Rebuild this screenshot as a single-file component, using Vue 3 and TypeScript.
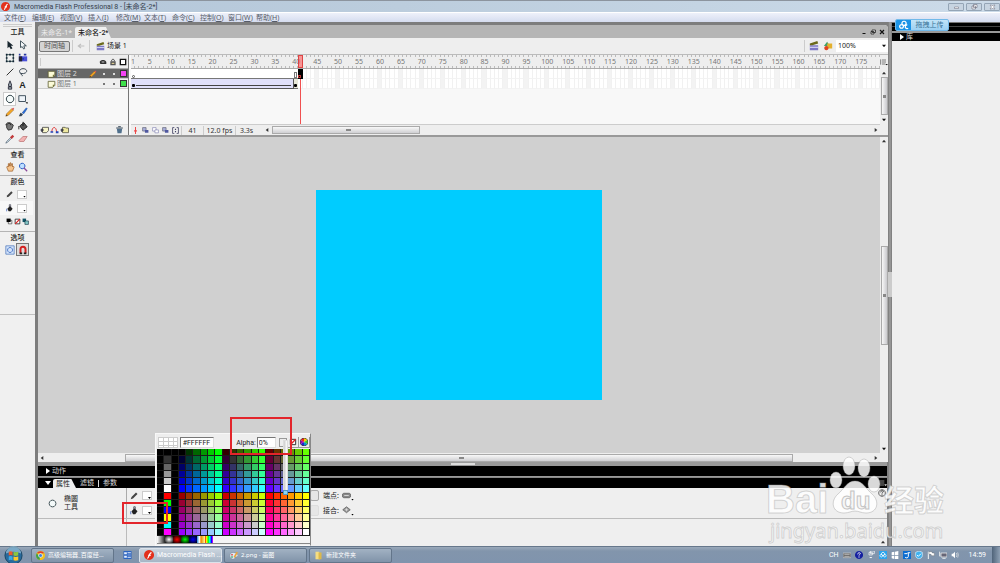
<script setup lang="ts">
import { ref } from 'vue'

interface Shape { d: string; f?: string; s?: string; w?: number }

const icons: Record<string, Shape[]> = {
  arrow: [{ d: 'M3 1v9l2-2 2 3 2-1-2-3h3z', f: '#18262e' }],
  subarrow: [{ d: 'M3 1v8l2-1 2 3 1-1-1-3h3z', f: '#f4f8fa', s: '#253842', w: 1 }],
  transform: [{ d: 'M2 2h8v8H2z', s: '#244', w: 1 }, { d: 'M1 1h2v2H1zM9 1h2v2H9zM1 9h2v2H1zM9 9h2v2H9zM5 1h2v2H5zM5 9h2v2H5zM1 5h2v2H1zM9 5h2v2H9z', f: '#123' }],
  gradient: [{ d: 'M1 4h10v6H1z', f: '#4a50d8' }, { d: 'M1 4h4v6H1z', f: '#223' }, { d: 'M1 1h2v2H1zM7 1h3v2H7zM5 6h2v2H5z', f: '#2838a0' }],
  line: [{ d: 'M2 10L10 2', s: '#333', w: 1.2 }],
  lasso: [{ d: 'M4 8C0 6 2 2 6 2s6 3 3 5-6 0-6 1 3 1 2 3', s: '#3d4a55', w: 1.2 }],
  pen: [{ d: 'M6 1l2 5-1 2H5L4 6zM4 8h4v3H4z', f: '#9aa6ac', s: '#223', w: 1 }],
  oval: [{ d: 'M6 1.500a4.500 4.500 0 1 0 .1 0z', f: '#f4fafa', s: '#34464c', w: 1.2 }],
  rect: [{ d: 'M1 2h8v7H1z', f: '#eef3f8', s: '#465662', w: 1.2 }, { d: 'M9 10h3l-1 2z', f: '#111' }],
  pencil: [{ d: 'M1 11l1-3 6-6 2 2-6 6z', f: '#f5a623', s: '#8a5a1a', w: 0.6 }, { d: 'M8 2l2-1 1 1-1 2z', f: '#d55' }, { d: 'M1 11l1-2 1 1z', f: '#222' }],
  brush: [{ d: 'M5 7l5-6 1 1-4 6z', f: '#2b6fe0', s: '#1a4a90', w: 0.6 }, { d: 'M1 11l2-4 2 1 1 1-2 2z', f: '#345' }],
  ink: [{ d: 'M2 4l4-2 4 3-2 5-4 1-2-3z', f: '#777', s: '#222', w: 1 }, { d: 'M1 5c1-4 5-4 6 0', s: '#111', w: 1 }],
  bucket: [{ d: 'M2 6l5-4 4 5-5 4z', f: '#555', s: '#111', w: 1 }, { d: 'M6 1v5M1 6v4', s: '#111', w: 1 }],
  dropper: [{ d: 'M1 11l1-2 5-5 1 1-5 5z', f: '#dceef5', s: '#456', w: 0.8 }, { d: 'M6 4l3-3 2 2-3 3z', f: '#c23a3a' }],
  eraser: [{ d: 'M1 8l5-5h5l-4 6H2z', f: '#f3b3b3', s: '#b56a6a', w: 0.8 }],
  hand: [{ d: 'M2 6l1-1 1 1V2h1v3l1-4h1v4l1-3h1v4l1-1 1 1-2 5H4z', f: '#f6c58e', s: '#9a5a22', w: 0.8 }],
  zoom: [{ d: 'M5 1.500a3.300 3.300 0 1 0 .1 0z', f: '#bfe0ff', s: '#2b62c8', w: 1.2 }, { d: 'M7 7l4 4', s: '#8a4a9a', w: 1.6 }],
  stroke: [{ d: 'M1 11l1-3 6-6 2 2-6 6z', f: '#444' }],
  fill: [{ d: 'M2 7l4-4 4 4-3 4H4z', f: '#222' }, { d: 'M5 5V1h2v4', s: '#334', w: 1 }, { d: 'M1 7v4', s: '#2a50b0', w: 1 }],
  bw: [{ d: 'M4 4h6v6H4z', f: '#fff', s: '#222', w: 1 }, { d: 'M1 1h7v6H1z', f: '#000' }],
  none: [{ d: 'M2 2h8v8H2z', f: '#fff', s: '#222', w: 1.4 }, { d: 'M2 10l8-8', s: '#d22', w: 2 }],
  swap: [{ d: 'M1 1h6v6H1z', f: '#156' }, { d: 'M5 5h6v6H5z', f: '#8cc', s: '#023', w: 1 }],
  draw: [{ d: 'M1 1h10v10H1z', f: '#d7e6fb', s: '#5a82c0', w: 1 }, { d: 'M6 3a3 3 0 1 0 .1 0z', s: '#3b6ac0', w: 1 }],
  magnet: [{ d: 'M3 10V5a3 3 0 0 1 6 0v5', s: '#d22020', w: 2.4 }, { d: 'M2 9h3v2H2zM7 9h3v2H7z', f: '#222' }],
  scene: [{ d: 'M1 5h10v6H1z', f: '#7d79c4' }, { d: 'M1 5V3l9-3 1 3-7 2z', f: '#6b6a1c' }, { d: 'M1 7h10v1H1z', f: '#e8e8ff' }],
  symbols: [{ d: 'M1 6l4-5 3 5z', f: '#3fa06a' }, { d: 'M5 3h6v6H5z', f: '#e3b02d' }, { d: 'M4 6a2.500 2.500 0 1 0 .1 0z', f: '#dd4422' }],
  eye: [{ d: 'M1 6c2-4 8-4 10 0v3H2z', f: '#333' }, { d: 'M4 5h4v2H4z', f: '#999' }],
  lock: [{ d: 'M2 5h8v6H2z', f: '#555' }, { d: 'M4 5V3q2-3 4 0v2', s: '#555', w: 1.4 }, { d: 'M4 7h4v2H4z', f: '#d8c890' }],
  box: [{ d: 'M2 2h8v8H2z', f: '#fff', s: '#111', w: 2 }],
  layer: [{ d: 'M1 2h10v6l-3 3H1z', f: '#fcfbd8', s: '#5c5c30', w: 1.2 }, { d: 'M11 7H8v4z', f: '#77773a' }],
  addlayer: [{ d: 'M3 2h9v5l-3 3H3z', f: '#f6f4c8', s: '#444', w: 1.2 }, { d: 'M0 6h5M2 4v5', s: '#223', w: 1.4 }],
  guide: [{ d: 'M2 9c0-9 7-9 7 0', s: '#d33', w: 1.4 }, { d: 'M0 8h4v2H0zM8 8h4v3H8z', f: '#24b' }],
  folder: [{ d: 'M3 2h4l1 1h4v7H3z', f: '#eee8a0', s: '#554', w: 1.2 }, { d: 'M0 6h5M2 4v5', s: '#223', w: 1.4 }],
  trash: [{ d: 'M2 4h8l-1 7H3z', f: '#50708c' }, { d: 'M1 3h10M4 1h4', s: '#345', w: 1.4 }],
  center: [{ d: 'M6 0v12', s: '#e22', w: 1.4 }, { d: 'M4 5h4v3H4z', f: '#e44' }],
  onion: [{ d: 'M1 1h6v6H1z', f: '#aab0dc', s: '#556', w: 1 }, { d: 'M5 5h6v5H5z', f: '#5058a0' }],
  onionline: [{ d: 'M1 1h6v6H1z', f: '#fff', s: '#77a', w: 1 }, { d: 'M5 5h6v5H5z', f: '#fff', s: '#77a', w: 1 }],
  brackets: [{ d: 'M4 1H1v10h3M8 1h3v10H8', s: '#446', w: 1.4 }, { d: 'M5 3h2v2H5zM5 7h2v2H5z', f: '#446' }],
  minus: [{ d: 'M3 8h6v2H3z', f: '#111' }],
  restore: [{ d: 'M4 2h7v5H4zM2 5h6v5H2z', f: '#ddd', s: '#111', w: 1.4 }],
  close: [{ d: 'M2 2l8 8M10 2l-8 8', s: '#111', w: 2.4 }],
  winmin: [{ d: 'M2 6h8v3H2z', f: '#fff', s: '#667', w: 1 }],
  winmax: [{ d: 'M4 1h7v6H4zM1 4h7v6H1z', f: '#fff', s: '#667', w: 1.2 }],
  winclose: [{ d: 'M1 2h3l2 2 2-2h3L8 6l3 4H8L6 8l-2 2H1l3-4z', f: '#fff', s: '#667', w: 1 }],
  up: [{ d: 'M3 8l3-4 3 4z', f: '#333' }],
  down: [{ d: 'M3 4l3 4 3-4z', f: '#111' }],
  left: [{ d: 'M8 3L4 6l4 3z', f: '#333' }],
  right: [{ d: 'M4 3l4 3-4 3z', f: '#333' }],
  options: [{ d: 'M1 2v8M3 3h6M3 6h6M3 9h5', s: '#444', w: 1 }, { d: 'M8 9h4l-2 2z', f: '#111' }],
  cloud: [{ d: 'M6 1.500a2.500 2.500 0 1 0 .1 0zM3 5.500a2.200 2.200 0 1 0 .1 0zM11 10a2.200 2.200 0 1 1-1-4', s: '#fff', w: 1.5 }],
  flash: [{ d: 'M6 0a6 6 0 1 0 .1 0z', f: '#e3301c' }, { d: 'M4 10c2 0 2-7 5-7M5 6.500h3', s: '#fff', w: 1.5 }],
  chrome: [{ d: 'M6 0a6 6 0 1 0 .1 0z', f: '#f2c21b' }, { d: 'M1 3a6 6 0 0 1 10 0H6z', f: '#e33b2e' }, { d: 'M1 3l4 5v4A6 6 0 0 1 1 3z', f: '#3ba14a' }, { d: 'M6 3.500a2.500 2.500 0 1 0 .1 0z', f: '#3b7fe0', s: '#fff', w: 1 }],
  panels: [{ d: 'M0 0h12v12H0z', f: '#2b63c0' }, { d: 'M1 2h4v3H1zM6 2h5v1H6zM6 4h5v1H6zM1 7h4v3H1zM6 7h5v1H6zM6 9h5v1H6z', f: '#e6f0ff' }],
  paint: [{ d: 'M6 2C1 2 0 6 2 9s6 2 6 0 4 0 4-3-3-4-6-4z', f: '#dfe9f2', s: '#789', w: 0.8 }, { d: 'M3 4h2v2H3z', f: '#d44' }, { d: 'M3 7h2v2H3z', f: '#3a6' }, { d: 'M6 8l4-7 2 1-4 7z', f: '#e9a33c' }],
  dir: [{ d: 'M2 1h5l1 10H2z', f: '#f5dd82' }, { d: 'M6 2h4v9H6z', f: '#dcb84a' }],
  keyboard: [{ d: 'M0 3h12v7H0z', f: '#666', s: '#ccc', w: 1 }, { d: 'M2 5h8M2 8h8', s: '#ddd', w: 1 }],
  help: [{ d: 'M6 0a6 6 0 1 0 .1 0z', f: '#1420a0' }, { d: 'M4 5c0-3 4-3 4-1 0 1-2 1-2 3M6 8v2', s: '#fff', w: 1.3 }],
  stack: [{ d: 'M5 0h6v4H5zM3 2h5v4H3z', s: '#fff', w: 1 }, { d: 'M3 9h5l-2 2z', f: '#fff' }],
  netdisk: [{ d: 'M0 0h12v12H0z', f: '#29a4ee' }, { d: 'M6 2a2.500 2.500 0 1 0 .1 0zM3.500 5a2 2 0 1 0 .1 0zM8.500 5a2 2 0 1 0 .1 0z', s: '#fff', w: 1.2 }],
  windows: [{ d: 'M1 2l4-1v5H1zM6 1l5-1v6H6zM1 7h4v5l-4-1zM6 7h5v5H6z', f: '#fff' }],
  sync: [{ d: 'M0 0h12v12H0z', f: '#0a6cd0' }, { d: 'M2 4h4l2-2v6c0 3-4 3-5 1M9 3l2-1', s: '#fff', w: 1.5 }],
  shield: [{ d: 'M6 0l5 2v5c0 3-3 4-5 5-2-1-5-2-5-5V2z', f: '#3db2f0', s: '#e4f4ff', w: 1 }, { d: 'M3 6l2 2 4-4', s: '#fff', w: 1.4 }],
  flag: [{ d: 'M2 1v11', s: '#fff', w: 1.4 }, { d: 'M3 1h4l1 2h3v4H7L6 5H3z', f: '#fff', s: '#555', w: 0.5 }],
  network: [{ d: 'M3 3h9v6H3z', f: '#667', s: '#eee', w: 1.2 }, { d: 'M1 1v7M5 11h5', s: '#eee', w: 1.4 }],
  speaker: [{ d: 'M1 4h2l3-3v10L3 8H1z', f: '#fff' }, { d: 'M8 3q2 3 0 6M10 2q2 4 0 8', s: '#eee', w: 0.9 }],
  wheel: [{ d: 'M6 6V0a6 6 0 0 1 5 3z', f: '#fc0' }, { d: 'M6 6l5-3a6 6 0 0 1 0 6z', f: '#4c2' }, { d: 'M6 6l5 3a6 6 0 0 1-5 3z', f: '#09c' }, { d: 'M6 6v6a6 6 0 0 1-5-3z', f: '#22c' }, { d: 'M6 6L1 9a6 6 0 0 1 0-6z', f: '#90b' }, { d: 'M6 6L1 3a6 6 0 0 1 5-3z', f: '#e22' }, { d: 'M6 0a6 6 0 1 0 .1 0z', s: '#222', w: 1 }],
  cap: [{ d: 'M3 3h6c4 0 4 6 0 6H3C-1 9-1 3 3 3z', f: '#888', s: '#444', w: 0.8 }, { d: 'M3 6h6', s: '#eee', w: 1 }],
  join: [{ d: 'M6 1l5 4-5 4-5-4z', f: '#999', s: '#444', w: 0.8 }, { d: 'M4 5h4M6 3v4', s: '#eee', w: 0.8 }],
  question: [{ d: 'M6 1a5 5 0 1 0 .1 0z', f: '#eee', s: '#222', w: 1 }, { d: 'M4 5c0-3 4-3 4-1 0 1-2 1-2 3M6 8v2', s: '#222', w: 1.2 }],
  menu: [{ d: 'M1 3h7M1 6h7M1 9h7', s: '#aaa', w: 1.2 }, { d: 'M8 8h4l-2 3z', f: '#ddd' }],
  back: [{ d: 'M11 6H3M6 3L2 6l4 3', s: '#c0c0c0', w: 1.8 }],
}

const menus = ['文件(F)', '编辑(E)', '视图(V)', '插入(I)', '修改(M)', '文本(T)', '命令(C)', '控制(O)', '窗口(W)', '帮助(H)']
const tools = [
  ['arrow', '选择'], ['subarrow', '部分选取'], ['transform', '任意变形'], ['gradient', '填充变形'],
  ['line', '线条'], ['lasso', '套索'], ['pen', '钢笔'], ['text', '文本'],
  ['oval', '椭圆'], ['rect', '矩形'], ['pencil', '铅笔'], ['brush', '刷子'],
  ['ink', '墨水瓶'], ['bucket', '颜料桶'], ['dropper', '滴管'], ['eraser', '橡皮擦'],
]
const frames = Array.from({ length: 179 }, (_, i) => i + 1)
const labels = [1, ...Array.from({ length: 35 }, (_, i) => (i + 1) * 5)]
const layers = [
  { name: '图层 2', color: '#f442f4', active: true },
  { name: '图层 1', color: '#3ee04a', active: false },
]
// Web-safe palette: a column of grays and primaries, then six 6x6 blocks, one per red level
const left = ['#000', '#333', '#666', '#999', '#ccc', '#fff', '#f00', '#0f0', '#00f', '#ff0', '#0ff', '#f0f']
const web = ['00', '33', '66', '99', 'cc', 'ff']
const cells: string[] = []
for (let r = 0; r < 12; r++) {
  cells.push('#000', left[r], '#000')
  for (let c = 0; c < 18; c++) {
    const red = web[Math.floor(c / 6) + (r > 5 ? 3 : 0)]
    cells.push('#' + red + web[c % 6] + web[r % 6])
  }
}
const gradients = ['gray', 'white', 'red', 'green', 'blue', 'gold', 'rainbow']
const tray = ['keyboard', 'help', 'stack', 'netdisk', 'windows', 'sync', 'shield', 'flag', 'network', 'speaker']
const tasks = [
  { icon: 'chrome', text: '高级编辑器_百度经...', cls: 'first' },
  { icon: 'flash', text: 'Macromedia Flash ...', cls: 'current' },
  { icon: 'paint', text: '2.png - 画图', cls: '' },
  { icon: 'dir', text: '新建文件夹', cls: '' },
]
const hex = ref('#FFFFFF')
const alpha = ref('0%')
const zoomLevel = ref('100%')
</script>

<template>
  <div class="app">
    <svg class="defs" aria-hidden="true">
      <symbol v-for="(shapes, name) in icons" :id="'i-' + name" :key="name" viewBox="0 0 12 12">
        <path v-for="(s, i) in shapes" :key="i" :d="s.d" :fill="s.f || 'none'" :stroke="s.s || 'none'" :stroke-width="s.w || 0" />
      </symbol>
    </svg>

    <header class="titlebar">
      <svg class="ic"><use href="#i-flash" /></svg>
      <span class="title">Macromedia Flash Professional 8 - [未命名-2*]</span>
      <div class="winbtns">
        <button v-for="b in ['winmin', 'winmax', 'winclose']" :key="b" :aria-label="b"><svg><use :href="'#i-' + b" /></svg></button>
      </div>
    </header>
    <nav class="menubar">
      <button v-for="m in menus" :key="m">{{ m.slice(0, 3) }}<u>{{ m[3] }}</u>)</button>
    </nav>

    <div class="main">
      <aside class="tools">
        <div class="grip"></div>
        <h2>工具</h2>
        <div class="toolgrid all">
          <button v-for="t in tools" :key="t[0]" :class="{ on: t[0] === 'oval' }" :aria-label="t[1]">
            <b v-if="t[0] === 'text'">A</b>
            <svg v-else><use :href="'#i-' + t[0]" /></svg>
          </button>
        </div>
        <h2 class="sep">查看</h2>
        <div class="toolgrid">
          <button aria-label="手形"><svg><use href="#i-hand" /></svg></button>
          <button aria-label="缩放"><svg><use href="#i-zoom" /></svg></button>
        </div>
        <h2 class="sep">颜色</h2>
        <div class="colorrow"><svg><use href="#i-stroke" /></svg><button class="swatch" aria-label="笔触颜色"></button></div>
        <div class="colorrow lit"><svg><use href="#i-fill" /></svg><button class="swatch" aria-label="填充颜色"></button></div>
        <div class="mini">
          <button v-for="n in ['bw', 'none', 'swap']" :key="n" :aria-label="n"><svg><use :href="'#i-' + n" /></svg></button>
        </div>
        <h2 class="sep">选项</h2>
        <div class="toolgrid">
          <button aria-label="对象绘制"><svg><use href="#i-draw" /></svg></button>
          <button class="pressed" aria-label="贴紧"><svg><use href="#i-magnet" /></svg></button>
        </div>
        <div class="toolend"></div>
      </aside>

      <section class="work">
        <div class="doc">
          <div class="tabs">
            <button class="tab">未命名-1*</button>
            <button class="tab active">未命名-2*</button>
            <div class="docbtns">
              <button v-for="b in ['minus', 'restore', 'close']" :key="b" :aria-label="b"><svg><use :href="'#i-' + b" /></svg></button>
            </div>
          </div>
          <div class="scenebar">
            <button class="tlbtn">时间轴</button>
            <i class="vr"></i>
            <svg class="ic"><use href="#i-back" /></svg>
            <i class="vr"></i>
            <svg class="ic sc"><use href="#i-scene" /></svg>
            <span>场景 1</span>
            <div class="scright">
              <i class="vr"></i>
              <button aria-label="编辑场景"><svg><use href="#i-scene" /></svg></button>
              <button aria-label="编辑元件"><svg><use href="#i-symbols" /></svg></button>
              <label><select v-model="zoomLevel" aria-label="缩放比率"><option>100%</option></select><svg><use href="#i-down" /></svg></label>
            </div>
          </div>

          <div class="timeline">
            <div class="layers">
              <div class="lhead">
                <i class="vr"></i>
                <svg><use href="#i-eye" /></svg><svg><use href="#i-lock" /></svg><svg><use href="#i-box" /></svg>
              </div>
              <div v-for="l in layers" :key="l.name" class="layer" :class="{ active: l.active }">
                <svg class="ic"><use href="#i-layer" /></svg>
                <span>{{ l.name }}</span>
                <svg v-if="l.active" class="pc"><use href="#i-pencil" /></svg>
                <i class="dot"></i><i class="dot"></i>
                <i class="chip" :style="{ background: l.color }"></i>
              </div>
              <div class="lfoot">
                <button v-for="n in ['addlayer', 'guide', 'folder']" :key="n" :aria-label="n"><svg><use :href="'#i-' + n" /></svg></button>
                <button class="bin" aria-label="删除图层"><svg><use href="#i-trash" /></svg></button>
              </div>
            </div>
            <div class="frames">
              <div class="fgrid ruler">
                <i v-for="f in frames" :key="f" class="tick" :style="{ gridColumn: String(f) }"></i>
                <span v-for="n in labels" :key="'l' + n" :style="{ gridColumn: String(n) }">{{ n }}</span>
                <i class="headbox"></i>
              </div>
              <div class="fgrid row">
                <i v-for="f in frames" :key="f" :class="{ five: f % 5 === 0 }" :style="{ gridColumn: String(f) }"></i>
                <b class="span blank"><em class="ring"></em></b>
                <b class="kf"><em class="hollow"></em></b>
                <b class="now"><em></em></b>
              </div>
              <div class="fgrid row">
                <i v-for="f in frames" :key="f" :class="{ five: f % 5 === 0 }" :style="{ gridColumn: String(f) }"></i>
                <b class="span tween"><em></em></b>
                <b class="kf beige"><em></em></b>
              </div>
              <div class="fgrid rest"><i class="headline"></i></div>
              <div class="ffoot">
                <button v-for="(n, k) in ['center', 'onion', 'onionline', 'onion', 'brackets']" :key="k" class="fb" :aria-label="n"><svg><use :href="'#i-' + n" /></svg></button>
                <span class="n1">41</span><span class="n2">12.0 fps</span><span class="n1">3.3s</span>
                <div class="hbar"><svg><use href="#i-left" /></svg><i class="thumb"></i><i class="space"></i><svg><use href="#i-right" /></svg></div>
              </div>
            </div>
            <div class="vbar tl">
              <svg class="opt"><use href="#i-options" /></svg>
              <svg><use href="#i-up" /></svg>
              <i class="vthumb"></i>
              <svg><use href="#i-down" /></svg>
            </div>
          </div>

          <div class="stagerow">
            <div class="stage"><div class="canvas"></div></div>
            <div class="vbar st">
              <svg><use href="#i-up" /></svg><i class="space"></i><i class="vthumb"></i><i class="space two"></i><svg><use href="#i-down" /></svg>
            </div>
          </div>
          <div class="hbar st"><svg><use href="#i-left" /></svg><i class="pad"></i><i class="thumb"></i><i class="space"></i><svg><use href="#i-right" /></svg></div>
        </div>

        <div class="panels">
          <i class="notch"></i>
          <div class="bar"><svg class="tri"><path d="M1 0l4 3-4 3z" fill="#fff" /></svg>动作</div>
          <div class="bar two">
            <svg class="tri"><path d="M0 1h6L3 5z" fill="#fff" /></svg>
            <button class="ptab">属性</button><button>滤镜</button><i></i><button>参数</button>
            <svg class="pm"><use href="#i-menu" /></svg>
          </div>
          <div class="props">
            <div class="pupper">
              <div class="pname"><svg><use href="#i-oval" /></svg><span>椭圆<br />工具</span></div>
              <div class="pcolors">
                <div><svg><use href="#i-stroke" /></svg><button class="swatch" aria-label="笔触"></button></div>
                <div><svg><use href="#i-fill" /></svg><button class="swatch" aria-label="填充"></button></div>
              </div>
              <div class="pcaps">
                <div><button class="slot" aria-label="自定义"></button><span>端点:</span><svg><use href="#i-cap" /></svg><i class="drop"></i></div>
                <div><button class="slot dim" aria-label="缩放"></button><span>接合:</span><svg><use href="#i-join" /></svg><i class="drop"></i></div>
              </div>
              <svg class="pq"><use href="#i-question" /></svg>
            </div>
            <div class="plower"><svg><use href="#i-up" /></svg></div>
          </div>
        </div>
      </section>

      <div class="divider"><i></i></div>

      <aside class="library">
        <div class="ltop"></div>
        <div class="lbar"><svg class="tri"><path d="M1 0l4 3-4 3z" fill="#fff" /></svg>库</div>
      </aside>
    </div>

    <footer class="taskbar">
      <button class="orb" aria-label="开始">
        <svg viewBox="0 0 20 20">
          <circle cx="10" cy="10" r="9" fill="#286a9c" stroke="#16425f" />
          <path d="M2 8a8 8 0 0 1 16 0q-8-4-16 0z" fill="#9cc4da" opacity=".7" />
          <path d="M5 6q2-1 4 0v4q-2-1-4 0z" fill="#ee5a2a" /><path d="M10 6q2 1 5 0v4q-3 1-5 0z" fill="#8cc63f" />
          <path d="M5 11q2-1 4 0v4q-2-1-4 0z" fill="#3ba9e8" /><path d="M10 11q2 1 5 0v4q-3 1-5 0z" fill="#fdc82a" />
        </svg>
      </button>
      <template v-for="(t, i) in tasks" :key="t.text">
        <button class="task" :class="t.cls"><svg><use :href="'#i-' + t.icon" /></svg><span>{{ t.text }}</span></button>
        <button v-if="i === 0" class="pin" aria-label="面板"><svg><use href="#i-panels" /></svg></button>
      </template>
      <div class="tray">
        <span>CH</span>
        <svg v-for="n in tray" :key="n"><use :href="'#i-' + n" /></svg>
        <time>14:59</time>
        <i class="peek"></i>
      </div>
    </footer>

    <div class="upload"><i><svg><use href="#i-cloud" /></svg></i><button>拖拽上传</button></div>

    <div class="picker">
      <div class="phead">
        <i class="preview"></i>
        <input v-model="hex" class="hex" aria-label="颜色值" />
        <label for="alpha">Alpha:</label>
        <input id="alpha" v-model="alpha" class="alpha" />
        <button class="dd" aria-label="Alpha 滑块"></button>
        <button class="pb" aria-label="无颜色"><svg><use href="#i-none" /></svg></button>
        <button class="pb" aria-label="颜色选择器"><svg><use href="#i-wheel" /></svg></button>
      </div>
      <div class="cells"><i v-for="(c, i) in cells" :key="i" :style="{ background: c }"></i></div>
      <div class="grads"><i v-for="g in gradients" :key="g" :class="g"></i></div>
      <div class="slider"><i></i></div>
    </div>

    <div class="mark alpha-mark"></div>
    <div class="mark fill-mark"></div>

    <svg class="water" viewBox="0 0 184 92">
      <g fill="#fff" fill-opacity=".85" stroke="#999" stroke-opacity=".4" stroke-width="1">
        <ellipse cx="83" cy="12" rx="6" ry="9" /><ellipse cx="98" cy="14" rx="6" ry="9" />
        <ellipse cx="70" cy="26" rx="6" ry="8" /><ellipse cx="108" cy="30" rx="6" ry="8" />
        <path d="M89 27c8 0 11 8 17 13 8 7 6 19-6 19-5 0-7-2-11-2s-6 2-11 2c-12 0-14-12-6-19 6-5 9-13 17-13z" />
        <text x="0" y="59" class="bai">Bai</text>
        <text x="118" y="57" class="jy">经验</text>
        <text x="4" y="84" class="url">jingyan.baidu.com</text>
      </g>
      <text x="75" y="55" class="du">du</text>
    </svg>
  </div>
</template>

<style>
html, body { margin: 0; }
</style>

<style scoped>
* { box-sizing: border-box; }
.app {
  position: relative; height: 100vh; display: flex; flex-direction: column; overflow: hidden;
  font: 7px/10px "Noto Sans", "Noto Sans CJK SC", sans-serif; color: #222; background: #efefef;
}
button { font: inherit; color: inherit; border: 0; padding: 0; margin: 0; background: none; display: flex; align-items: center; justify-content: center; white-space: nowrap; }
input, select { font: inherit; color: inherit; margin: 0; padding: 0; border: 0; min-width: 0; appearance: none; border-radius: 0; outline: 0; }
svg { width: 8px; height: 8px; flex: none; display: block; }
i, em { font-style: normal; display: block; }
.defs { position: absolute; width: 0; height: 0; }
h2 { margin: 0; font-size: 7px; line-height: 10px; font-weight: 500; text-align: center; }

.titlebar { height: 12px; flex: none; display: flex; align-items: center; gap: 4px; padding-left: 1px; border-top: 1px solid #8c949e; background: linear-gradient(90deg, #b3c6d9, #bccddd 40%, #ccdbe9); }
.titlebar .ic { width: 9px; height: 9px; }
.title { font-family: Roboto, "Noto Sans CJK SC", sans-serif; color: #35404c; white-space: nowrap; }
.winbtns { margin-left: auto; display: flex; gap: 2px; }
.winbtns button { width: 16px; height: 8px; border: 1px solid #94a5b6; border-radius: 1px; background: #c7d4e1; }
.winbtns svg { width: 7px; height: 6px; }
.menubar { height: 10px; flex: none; display: flex; align-items: center; padding-left: 4px; border-top: 1px solid #fff; background: linear-gradient(#eef1fa, #d5dcef); color: #555b68; }
.menubar button { width: 28px; justify-content: flex-start; }

.main { flex: 1; min-height: 0; display: flex; }
.tools { width: 35px; flex: none; padding-top: 2px; background: #f0f0f0; display: flex; flex-direction: column; }
.grip { height: 3px; margin: 0 3px; border-top: 1px solid #ccc; border-bottom: 1px solid #ccc; }
.tools h2 { height: 11px; }
.tools h2.sep { border-top: 1px solid #b4b4b4; margin-top: 2px; height: 12px; padding-top: 1px; }
.tools .mini + .sep { margin-top: 4px; }
.toolgrid { display: grid; grid-template-columns: 13px 13px; grid-auto-rows: 13px; justify-content: center; margin-right: 3px; }
.toolgrid.all { height: 108px; grid-auto-rows: 1fr; }
.toolgrid svg { width: 10px; height: 10px; }
.toolgrid b { font: bold 9px/12px "Liberation Sans", sans-serif; }
.toolgrid .on { background: #fff; border: 1px solid #ccc; }
.toolgrid .pressed { border: 1px solid #777; background: #ddd; }
.colorrow { display: flex; align-items: center; justify-content: center; gap: 3px; height: 14px; margin-right: 2px; }
.colorrow.lit { background: #f8f8f8; }
.swatch { width: 10px; height: 9px; background: #fff; border: 1px solid #ccc; position: relative; }
.swatch::after, .drop::after { content: ""; position: absolute; right: 0; bottom: 0; width: 3px; height: 2px; background: #000; clip-path: polygon(0 0, 100% 0, 50% 100%); }
.mini { display: flex; justify-content: center; gap: 1px; height: 12px; align-items: center; }
.mini svg { width: 7px; height: 7px; }
.toolend { margin-top: 58px; border-top: 1px solid #c0c0c0; }

.work { flex: 1; min-width: 0; display: flex; flex-direction: column; background: #7d7d7d; padding: 3px 0 0 3px; }
.doc { flex: 1; min-height: 0; display: flex; flex-direction: column; background: #eee; border-radius: 4px 4px 0 0; overflow: hidden; }
.tabs { height: 13px; flex: none; display: flex; align-items: flex-end; background: #b5b5b5; }
.tab { width: 37px; height: 10px; color: #eee; }
.tab.active { background: #efefef; color: #222; width: 36px; height: 11px; border-radius: 2px 2px 0 0; clip-path: polygon(0 0, 86% 0, 100% 100%, 0 100%); justify-content: flex-start; padding-left: 3px; font-family: Roboto, "Noto Sans CJK SC", sans-serif; font-weight: 500; }
.docbtns { margin: 0 3px 3px auto; display: flex; gap: 3px; }
.docbtns svg { width: 6px; height: 6px; }
.scenebar { height: 16px; flex: none; display: flex; align-items: center; gap: 2px; padding-left: 1px; }
.tlbtn { width: 31px; height: 11px; border: 1px solid #777; border-radius: 2px; background: #d4d4d4; color: #555; }
.vr { width: 1px; height: 12px; background: #ccc; }
.scenebar .ic { margin: 0 2px; }
.scenebar .sc { width: 9px; height: 9px; margin: 0 0 0 4px; }
.scright { margin-left: auto; display: flex; align-items: center; gap: 4px; }
.scright svg { width: 10px; height: 10px; }
.scright label { display: flex; align-items: center; background: #fff; width: 52px; height: 12px; padding-left: 2px; margin-left: -1px; }
.scright select { flex: 1; background: #fff; }
.scright label svg { width: 8px; height: 8px; }

.timeline { height: 83px; flex: none; display: flex; background: #f8f8f8; border-top: 1px solid #bbb; border-bottom: 2px solid #999; }
.layers { width: 91px; flex: none; display: flex; flex-direction: column; border-right: 1px solid #777; }
.lhead { height: 14px; display: flex; align-items: center; justify-content: flex-end; gap: 2px; padding: 0 1px 0 2px; background: #eee; border-bottom: 1px solid #aaa; }
.lhead .vr { height: 8px; margin-right: auto; }
.layer { height: 10px; display: flex; align-items: center; padding: 0 1px 0 9px; background: #efefef; color: #777; border-bottom: 1px solid #ccc; }
.layer.active { background: #666; color: #ddd; }
.layer span { flex: 1; padding-left: 1px; }
.layer .ic { width: 9px; height: 8px; }
.pc { margin-right: 2px; }
.dot { width: 10px; height: 2px; background: linear-gradient(90deg, transparent 4px, currentColor 4px, currentColor 6px, transparent 6px); }
.chip { width: 7px; height: 7px; border: 1px solid #333; margin-left: 1px; }
.lfoot { margin-top: auto; height: 11px; display: flex; align-items: center; padding: 0 4px 0 2px; gap: 1px; background: #eee; border-top: 1px solid #ddd; }
.lfoot button svg { width: 9px; height: 8px; }
.lfoot .bin { margin-left: auto; }
.frames { flex: 1; min-width: 0; display: flex; flex-direction: column; padding-left: 2px; }
.fgrid { display: grid; grid-template-columns: repeat(179, minmax(0, 1fr)); flex: none; }
.ruler { height: 14px; grid-template-rows: 13px; background: #eee; border-bottom: 1px solid #aaa; color: #777; }
.fgrid > * { grid-row: 1; }
.tick { border-right: 1px solid #bbb; background: #eee; height: 13px; position: relative; }
.tick::after { content: ""; position: absolute; left: 0; right: -1px; top: 2px; bottom: 2px; background: #eee; }
.ruler span { display: flex; justify-content: center; align-items: center; position: relative; height: 13px; overflow: visible; }
.headbox { grid-column: 41; border: 1px solid #d44; background: rgb(255 90 90 / 60%); position: relative; }
.row { height: 10px; background: #fff; grid-template-rows: 10px; }
.row > i { border-right: 1px solid #f1f1f1; border-bottom: 1px solid #f3f3f3; }
.row > i.five { background: #f3f3f3; }
.span { grid-column: 1 / 40; display: flex; align-items: flex-end; position: relative; }
.blank { background: #fff; border-bottom: 1px solid #777; }
.ring { width: 3px; height: 3px; border: 1px solid #555; border-radius: 50%; margin-left: 1px; }
.tween { background: #e0e0fa; border-bottom: 1px solid #555; border-right: 1px solid #555; }
.tween em { flex: 1; height: 1px; background: #444; margin: 0 2px 2px 5px; }
.tween::before, .beige em { content: ""; width: 3px; height: 3px; background: #000; border-radius: 1px; margin: 0 0 1px 1px; position: relative; }
.tween::before { position: absolute; left: 0; bottom: 0; }
.kf { grid-column: 40; display: flex; align-items: flex-end; border-bottom: 1px solid #777; background: #fff; position: relative; }
.kf.beige { background: #e8e8d8; }
.kf.beige em { margin-left: 0; }
.hollow { width: 3px; height: 6px; border: 1px solid #777; }
.now { grid-column: 41; background: #000; display: flex; align-items: flex-end; position: relative; }
.now em { width: 3px; height: 3px; border: 1px solid #b33; margin: 1px 0; }
.rest { flex: 1; grid-template-rows: 1fr; }
.headline { grid-column: 41; width: 1px; background: #f05050; margin: -10px 0 0 2px; position: relative; }
.ffoot { height: 11px; flex: none; display: flex; align-items: center; background: #eee; border-top: 1px solid #ccc; color: #333; }
.fb { width: 9px; margin-right: 1px; }
.fb svg { width: 7px; height: 7px; }
.ffoot span { border-left: 1px solid #ccc; text-align: center; height: 9px; line-height: 9px; }
.n1 { width: 22px; }
.n2 { width: 32px; }
.ffoot .hbar { flex: 1; padding-left: 6px; }
.hbar { display: flex; align-items: center; height: 8px; background: #eee; }
.thumb { height: 8px; border: 1px solid #aaa; background: linear-gradient(#f8f8f8, #cfcfd2); position: relative; }
.thumb::after, .vthumb::after { content: ""; position: absolute; left: 50%; top: 2px; width: 5px; height: 2px; background: #888; }
.ffoot .thumb { width: 24%; margin-left: 1px; }
.space { flex: 1; }
.vbar { width: 8px; flex: none; display: flex; flex-direction: column; align-items: center; background: #eee; }
.vthumb { width: 7px; border: 1px solid #aaa; background: linear-gradient(90deg, #f8f8f8, #cacace); position: relative; }
.vthumb::after { left: 1px; top: 48%; width: 3px; height: 3px; }
.vbar.tl .opt { height: 14px; }
.vbar.tl .vthumb { flex: 1; margin-bottom: 1px; }
.vbar.tl { padding-bottom: 11px; }

.stagerow { flex: 1; min-height: 0; display: flex; }
.stage { flex: 1; background: #d0d0d0; display: flex; align-items: center; justify-content: center; }
.canvas { width: 34%; aspect-ratio: 286 / 209; background: #0cf; }
.st .space { flex: 102; }
.st .vthumb { flex: 97; }
.st .space.two { flex: 101; }
.hbar.st { height: 9px; flex: none; padding-right: 8px; }
.st .pad { flex: 79; }
.hbar.st .thumb { flex: 665; }
.hbar.st .space { flex: 79; }

.panels { flex: none; position: relative; background: #9a9a9a; padding-top: 3px; margin-right: 1px; }
.notch { height: 2px; width: 24px; background: #ddd; margin: -2px auto 0; }
.bar { height: 10px; margin-top: 1px; background: #000; color: #ddd; display: flex; align-items: center; gap: 1px; padding-left: 7px; }
.bar.two { height: 11px; border-top: 1px solid #888; gap: 4px; padding-left: 7px; }
.bar.two > .tri { margin-right: -2px; }
.tri { width: 6px; height: 6px; }
.ptab { width: 23px; height: 9px; align-self: flex-end; background: #eee; color: #222; border-radius: 2px 2px 0 0; clip-path: polygon(0 0, 80% 0, 100% 100%, 0 100%); justify-content: flex-start; padding-left: 3px; }
.bar.two i { width: 1px; height: 7px; background: #ddd; }
.pm { margin-left: auto; }
.props { background: #efefef; }
.pupper { height: 31px; display: flex; border-bottom: 1px solid #bbb; position: relative; }
.pname { width: 89px; display: flex; align-items: center; gap: 7px; padding-left: 10px; border-right: 1px solid #aaa; line-height: 8px; }
.pname svg { width: 9px; height: 9px; }
.pcolors { width: 183px; padding: 0 0 0 3px; }
.pcolors > div, .pcaps > div { height: 15px; display: flex; align-items: center; gap: 3px; }
.pcolors svg { width: 9px; height: 9px; }
.slot { width: 9px; height: 11px; border: 1px solid #aaa; border-radius: 2px; background: #e6e6e6; margin-right: 1px; }
.slot.dim { border-color: #ddd; }
.pcaps span { width: 16px; white-space: nowrap; }
.pcaps svg { width: 9px; height: 9px; }
.drop { width: 3px; height: 10px; position: relative; margin-left: -3px; }
.pq { margin: 1px 1px 0 auto; }
.plower { height: 27px; display: flex; align-items: flex-end; justify-content: flex-end; margin-left: 88px; border-left: 1px solid #bbb; }

.divider { width: 4px; flex: none; background: linear-gradient(90deg, #777, #a0a0a0 50%, #777); display: flex; align-items: center; }
.divider i { width: 4px; height: 25px; background: #ccc; }
.library { width: 108px; flex: none; }
.ltop { height: 11px; background: linear-gradient(#777 1px, #000 1px, #000 4px, #444 4px, #444 5px, #000 5px, #000 9px, #999 9px); }
.lbar { height: 8px; background: #000; color: #ddd; display: flex; align-items: center; gap: 1px; padding-left: 7px; }

.taskbar { height: 17px; flex: none; display: flex; align-items: center; background: linear-gradient(#9aa9ba, #8295ac 4px, #8094ad); border-top: 1px solid #66778b; color: #fff; padding-left: 4px; }
.orb svg { width: 19px; height: 19px; }
.orb { height: 16px; margin-right: 8px; overflow: visible; }
.task { width: 83px; height: 15px; justify-content: flex-start; gap: 3px; padding-left: 4px; margin-right: 2px; border: 1px solid #63758a; border-radius: 2px; background: linear-gradient(#a2b2c3, #8093a9); font-size: 6px; }
.task.current { font-family: Roboto, sans-serif; font-size: 7px; background: linear-gradient(#cad4de, #a6b5c5); border-color: #dbe2ea; }
.task.current svg { width: 10px; height: 10px; }
.task svg { width: 9px; height: 9px; }
.pin { width: 23px; }
.pin svg { width: 9px; height: 8px; }
.tray { margin-left: auto; display: flex; align-items: center; gap: 4px; height: 100%; font-family: Roboto, sans-serif; }
.tray time { margin: 0 2px 0 6px; }
.peek { width: 8px; height: 16px; background: linear-gradient(90deg, #50647a, #8ea0b4); }

.upload { position: absolute; right: 51px; top: 19px; width: 54px; height: 12px; display: flex; border-radius: 2px; overflow: hidden; border: 1px solid #72b9ea; background: linear-gradient(#c2e4f8, #9bd0f3); color: #3a7296; }
.upload i { width: 15px; background: #1b93e6; display: flex; align-items: center; justify-content: center; }
.upload svg { width: 10px; height: 10px; }
.upload button { flex: 1; }

.picker { position: absolute; left: 155px; bottom: 17px; width: 156px; height: 113px; padding: 2px 0 1px 1px; background: #eee; border: 1px solid #f8f8f8; border-right-color: #888; display: flex; flex-direction: column; }
.phead { height: 13px; display: flex; align-items: center; padding-left: 1px; }
.preview { width: 20px; height: 11px; margin-right: 2px; border: 1px solid #ccc; background: repeating-linear-gradient(90deg, transparent 0 4px, #ccc 4px 5px), repeating-linear-gradient(#fff 0 3px, #ccc 3px 4px); }
.hex { width: 35px; height: 11px; background: #fff; border: 1px solid #777; border-right-color: #ddd; border-bottom-color: #ddd; padding-left: 2px; font-family: Roboto, sans-serif; }
.phead label { margin-left: 22px; width: 21px; font-family: Roboto, sans-serif; }
.alpha { width: 20px; height: 11px; background: #fff; border: 1px solid #777; border-right-color: #ddd; border-bottom-color: #ddd; padding-left: 1px; font-family: Roboto, sans-serif; }
.dd { width: 8px; height: 9px; border: 1px solid #999; margin: 0 1px 0 3px; }
.pb { width: 11px; height: 11px; border-right: 1px solid #999; border-bottom: 1px solid #999; }
.cells { flex: 1; min-height: 0; display: grid; grid-template-columns: repeat(21, 1fr); grid-template-rows: repeat(12, 1fr); background: #000; }
.cells i { border: solid #1a1a1a; border-width: 0 1px 1px 0; }
.grads { height: 8px; display: flex; background: #f4f4f4; border-bottom: 1px solid #888; }
.grads i { width: 8px; }
.gray { background: linear-gradient(90deg, #fff, #222); }
.white { background: radial-gradient(#fff, #000); }
.red { background: radial-gradient(#f00, #000); }
.green { background: radial-gradient(#0f0, #000); }
.blue { background: radial-gradient(#00f, #000); }
.gold { background: linear-gradient(90deg, #28d, #fff 30%, #e80 50%, #ff9); }
.rainbow { background: linear-gradient(90deg, #f00, #ff0, #0f0, #0ff, #00f, #f0f); }
.slider { position: absolute; left: 127px; top: 6px; width: 5px; height: 55px; background: linear-gradient(90deg, #ccc, #fff); border: 1px solid #ddd; }
.slider i { position: absolute; left: -1px; bottom: -1px; width: 5px; height: 5px; background: #8ed8f4; border: 1px solid #5299c0; }

.mark { position: absolute; border: 2px solid #e3252b; }
.alpha-mark { left: 230px; bottom: 108px; width: 62px; height: 38px; }
.fill-mark { left: 122px; bottom: 39px; width: 46px; height: 22px; }

.water { position: absolute; right: 50px; bottom: 17px; width: 184px; height: 92px; overflow: visible; }
.bai { font: bold 40px "Liberation Sans", sans-serif; }
.jy { font: bold 30px "Noto Sans CJK SC", sans-serif; }
.url { font: 20px "Noto Sans", sans-serif; }
.du { font: bold 24px "Liberation Sans", sans-serif; fill: #f6f6f6; stroke: #c4c4c4; stroke-width: 1px; }
</style>
